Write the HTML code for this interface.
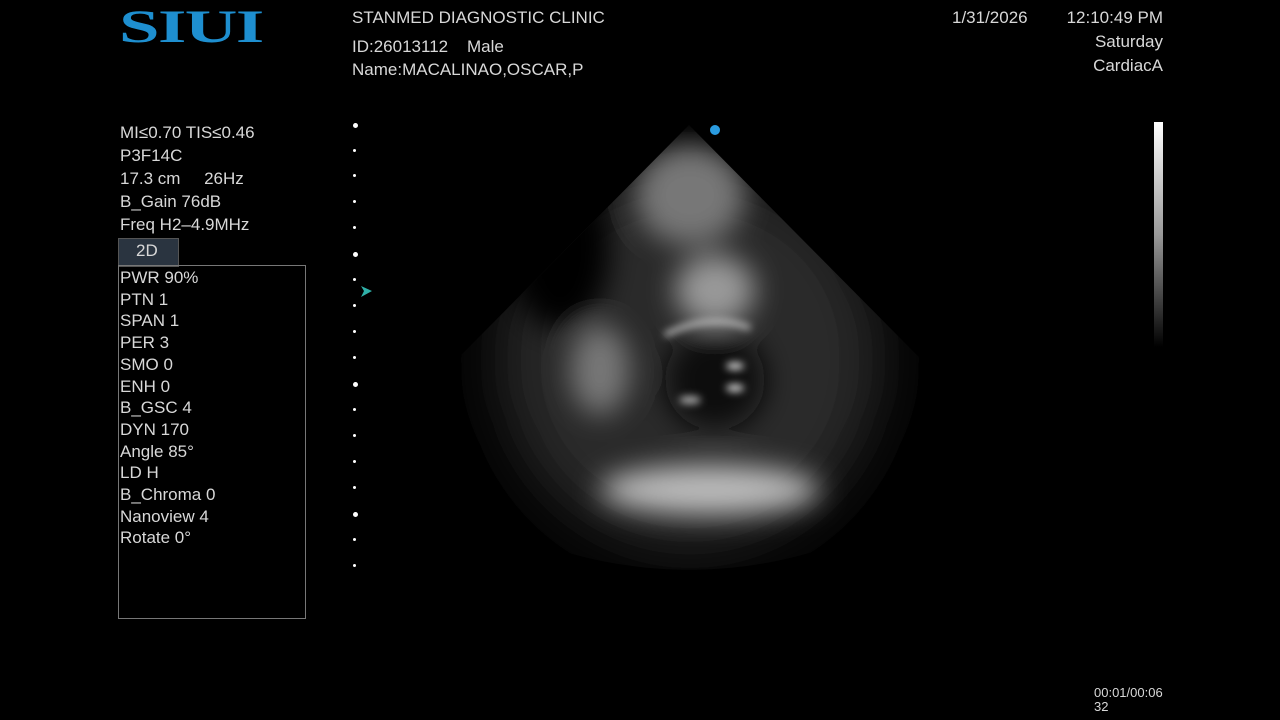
<!DOCTYPE html>
<html><head><meta charset="utf-8"><style>
body{margin:0;width:1280px;height:720px;background:#000;overflow:hidden;position:relative;font-family:"Liberation Sans",sans-serif;color:#d8d8d8}
.t{position:absolute;font-size:17px;white-space:nowrap;line-height:20px}
.logo{position:absolute;left:119px;top:2px;font-family:"Liberation Serif",serif;font-weight:bold;font-size:47px;line-height:50px;color:#1e8fd0;letter-spacing:-1px;transform:scaleX(1.55);transform-origin:left}
.dot{position:absolute;width:4px;height:4px;border-radius:50%;background:#fff;left:353px}
</style></head><body>
<div class="logo">SIUI</div>
<div class="t" style="left:352px;top:8px">STANMED DIAGNOSTIC CLINIC</div>
<div class="t" style="left:352px;top:37px">ID:26013112&nbsp;&nbsp;&nbsp;&nbsp;Male</div>
<div class="t" style="left:352px;top:60px">Name:MACALINAO,OSCAR,P</div>
<div class="t" style="left:952px;top:8px">1/31/2026</div>
<div class="t" style="right:117px;top:8px">12:10:49 PM</div>
<div class="t" style="right:117px;top:32px">Saturday</div>
<div class="t" style="right:117px;top:56px">CardiacA</div>
<div class="t" style="left:120px;top:121px;line-height:23px">MI≤0.70 TIS≤0.46<br>P3F14C<br>17.3 cm&nbsp;&nbsp;&nbsp;&nbsp;&nbsp;26Hz<br>B_Gain 76dB<br>Freq H2–4.9MHz</div>
<div style="position:absolute;left:118px;top:238px;width:59px;height:27px;background:#2a3440;border:1px solid #555"></div>
<div class="t" style="left:136px;top:241px">2D</div>
<div style="position:absolute;left:118px;top:265px;width:186px;height:352px;border:1px solid #777"></div>
<div class="t" style="left:120px;top:267px;line-height:21.7px">PWR 90%<br>PTN 1<br>SPAN 1<br>PER 3<br>SMO 0<br>ENH 0<br>B_GSC 4<br>DYN 170<br>Angle 85°<br>LD H<br>B_Chroma 0<br>Nanoview 4<br>Rotate 0°</div>
<div class="dot" style="top:123px;width:5px;height:5px"></div>
<div class="dot" style="top:149px;width:3px;height:3px"></div>
<div class="dot" style="top:174px;width:3px;height:3px"></div>
<div class="dot" style="top:200px;width:3px;height:3px"></div>
<div class="dot" style="top:226px;width:3px;height:3px"></div>
<div class="dot" style="top:252px;width:5px;height:5px"></div>
<div class="dot" style="top:278px;width:3px;height:3px"></div>
<div class="dot" style="top:304px;width:3px;height:3px"></div>
<div class="dot" style="top:330px;width:3px;height:3px"></div>
<div class="dot" style="top:356px;width:3px;height:3px"></div>
<div class="dot" style="top:382px;width:5px;height:5px"></div>
<div class="dot" style="top:408px;width:3px;height:3px"></div>
<div class="dot" style="top:434px;width:3px;height:3px"></div>
<div class="dot" style="top:460px;width:3px;height:3px"></div>
<div class="dot" style="top:486px;width:3px;height:3px"></div>
<div class="dot" style="top:512px;width:5px;height:5px"></div>
<div class="dot" style="top:538px;width:3px;height:3px"></div>
<div class="dot" style="top:564px;width:3px;height:3px"></div>
<svg style="position:absolute;left:0;top:0" width="1280" height="720">
<defs>
<clipPath id="s"><path d="M689,125 L377,440 A440,440 0 0 0 1001,440 Z"/></clipPath>
<filter id="b" x="-50%" y="-50%" width="200%" height="200%"><feGaussianBlur stdDeviation="14"/></filter>
<filter id="b2" x="-50%" y="-50%" width="200%" height="200%"><feGaussianBlur stdDeviation="4"/></filter>
<filter id="b3" x="-50%" y="-50%" width="200%" height="200%"><feGaussianBlur stdDeviation="30"/></filter>
<linearGradient id="g" x1="0" y1="0" x2="0" y2="1"><stop offset="0" stop-color="#fff"/><stop offset="0.5" stop-color="#999"/><stop offset="1" stop-color="#000"/></linearGradient>
</defs>
<g clip-path="url(#s)">
<rect x="370" y="120" width="640" height="460" fill="#000"/>
<g filter="url(#b3)">
<ellipse cx="690" cy="360" rx="190" ry="190" fill="#2a2a2a"/>
</g>
<g filter="url(#b)">
<ellipse cx="690" cy="195" rx="55" ry="50" fill="#777"/>
<ellipse cx="715" cy="290" rx="40" ry="35" fill="#999"/>
<ellipse cx="600" cy="370" rx="30" ry="45" fill="#777"/>
<ellipse cx="710" cy="490" rx="110" ry="25" fill="#bbb"/>
<ellipse cx="715" cy="380" rx="50" ry="50" fill="#080808"/>
<ellipse cx="560" cy="250" rx="50" ry="80" fill="#050505"/>
</g>
<g filter="url(#b2)">
<path d="M665,335 Q710,312 750,328" stroke="#bbb" stroke-width="5" fill="none"/>
<ellipse cx="735" cy="366" rx="9" ry="4" fill="#ccc"/>
<ellipse cx="735" cy="388" rx="9" ry="4" fill="#ccc"/>
<ellipse cx="690" cy="400" rx="11" ry="4" fill="#aaa"/>
</g>
</g>
<circle cx="715" cy="130" r="5" fill="#2a9be0"/>
<path d="M361,286 L372,291 L361,297 L364,291 Z" fill="#2fb0a8"/>
<rect x="1154" y="122" width="9" height="225" fill="url(#g)"/>
</svg>
<div class="t" style="left:1094px;top:686px;font-size:13px;line-height:14px">00:01/00:06<br>32</div>
</body></html>
